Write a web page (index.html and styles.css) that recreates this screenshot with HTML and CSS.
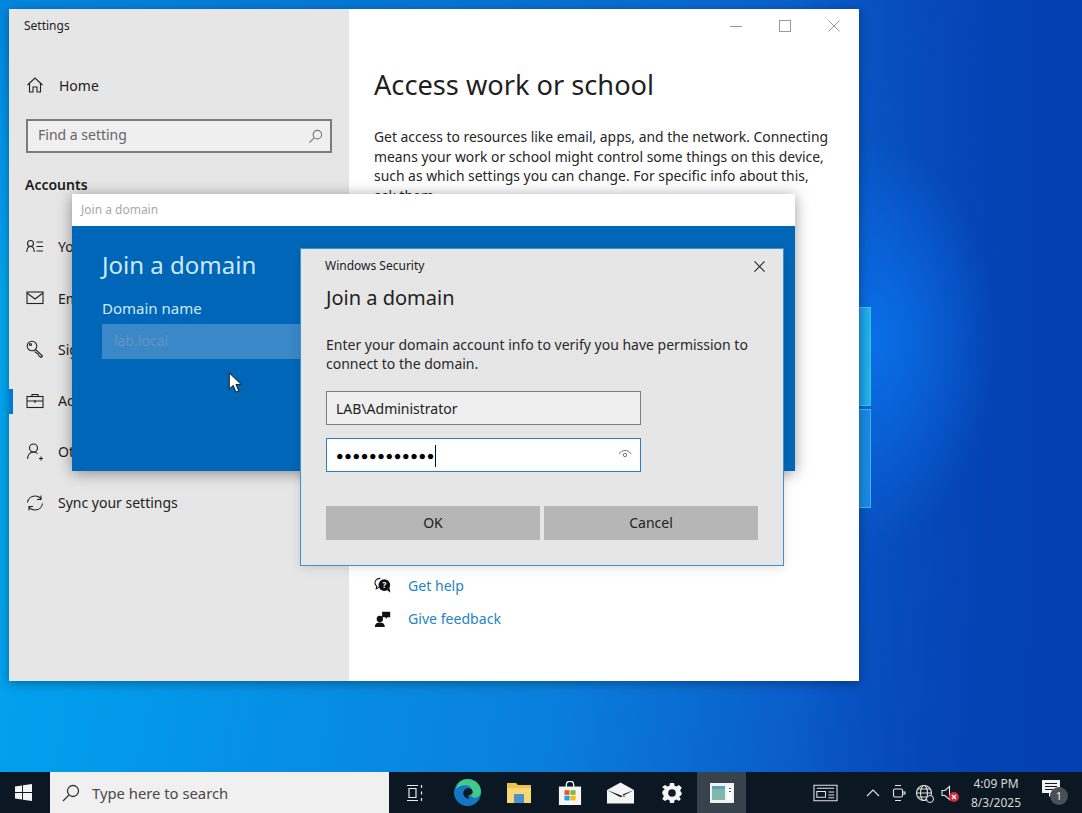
FILE: index.html
```html
<!DOCTYPE html>
<html>
<head>
<meta charset="UTF-8">
<title>Join a domain</title>
<link rel="stylesheet" href="styles.css">
</head>
<body>

<div class="desktop">
	<div class="glow"></div>
	<div class="logo-pane logo-top"></div>
	<div class="logo-pane logo-bottom"></div>

	<!-- settings window -->
	<div class="window settings">
		<div class="sidebar">
			<div class="app-title">Settings</div>
			<div class="nav-item home">
				<svg class="nav-icon" viewBox="0 0 18 18"><path d="M1.500 9 9 2l7.500 7M3.500 7.500V16h3.500v-5h4v5h3.500V7.500"/></svg>
				<span>Home</span>
			</div>
			<div class="find-box">
				<span class="find-text">Find a setting</span>
				<svg class="find-icon" viewBox="0 0 16 16"><circle cx="10" cy="6" r="4.500"/><path d="M6.800 9.200 1.500 14.500"/></svg>
			</div>
			<div class="section-title">Accounts</div>
			<div class="nav-list">
				<div class="nav-item">
					<svg class="nav-icon" viewBox="0 0 18 18"><circle cx="4.500" cy="5.500" r="3"/><path d="M.8 14c0-3.500 1.500-5.500 3.700-5.500S8.200 10.500 8.200 14M10.500 4H17M10.500 8.500H17M10.500 13H17"/></svg>
					<span>Your info</span>
				</div>
				<div class="nav-item">
					<svg class="nav-icon" viewBox="0 0 18 18"><rect x="1" y="3" width="16" height="11.500"/><path d="m1 4 8 6 8-6"/></svg>
					<span>Email &amp; accounts</span>
				</div>
				<div class="nav-item">
					<svg class="nav-icon" viewBox="0 0 18 18"><circle cx="6" cy="6" r="4.800"/><circle cx="4.500" cy="4.500" r="1"/><path d="m9.500 9.500 7 6.500-1.500 1.500-2-1.500-1-2-3.500-2.500"/></svg>
					<span>Sign-in options</span>
				</div>
				<div class="nav-item active">
					<svg class="nav-icon" viewBox="0 0 18 18"><rect x="1" y="4.500" width="16" height="11"/><path d="M6 4.500V2.500h6v2M1 9h16M9 8v3" /></svg>
					<span>Access work or school</span>
				</div>
				<div class="nav-item">
					<svg class="nav-icon" viewBox="0 0 18 18"><circle cx="7.500" cy="5" r="4"/><path d="M1.500 16c0-4 2.500-7 6-7 1.500 0 3 .6 4 1.600M13 15.500h4M15 13.500v4"/></svg>
					<span>Other users</span>
				</div>
				<div class="nav-item">
					<svg class="nav-icon" viewBox="0 0 18 18"><path d="M1.500 8.500C2 4.800 5 2 9 2c2.800 0 4.800 1.200 6 3.200M15 1.500v4h-4M16.500 9.500C16 13.200 13 16 9 16c-2.800 0-4.800-1.200-6-3.200M3 16.500v-4h4"/></svg>
					<span>Sync your settings</span>
				</div>
			</div>
		</div>
		<div class="main">
			<div class="caption-buttons">
				<svg viewBox="0 0 12 12"><path d="M0 6.500h12"/></svg>
				<svg viewBox="0 0 12 12"><rect x=".5" y=".5" width="11" height="11"/></svg>
				<svg viewBox="0 0 12 12"><path d="m.5.500 11 11M11.500.500l-11 11"/></svg>
			</div>
			<h1 class="page-title">Access work or school</h1>
			<p class="page-text">Get access to resources like email, apps, and the network. Connecting means your work or school might control some things on this device, such as which settings you can change. For specific info about this, ask them.</p>
			<div class="help-links">
				<div class="help-link">
					<svg viewBox="0 0 20 20"><path class="hollow" d="M7 1.500C3.500 1.500 1 3.800 1 6.500c0 1.500.8 2.800 2 3.700L2.500 13l3-1.500"/><circle cx="11.500" cy="9" r="6.500"/><path d="m14 14 4 3.500-.5-5z"/><text x="11.500" y="12" class="q">?</text></svg>
					<a>Get help</a>
				</div>
				<div class="help-link">
					<svg viewBox="0 0 20 20"><circle cx="6.500" cy="10" r="3.500"/><path d="M1 19c0-3.500 2-5 5.500-5s5.500 1.500 5.500 5zM9 2h9v6h-3l-2 2V8H9z"/></svg>
					<a>Give feedback</a>
				</div>
			</div>
		</div>
	</div>

	<!-- blue join dialog -->
	<div class="window join">
		<div class="join-title">Join a domain</div>
		<div class="join-body">
			<div class="join-heading">Join a domain</div>
			<div class="join-label">Domain name</div>
			<div class="join-input">lab.local</div>
		</div>
	</div>

	<svg class="cursor" viewBox="0 0 14 22"><path d="M1 1v17l4-4 3 7 3-1-3-7h5.500z"/></svg>

	<!-- credentials dialog -->
	<div class="window security">
		<div class="security-top">
			<span>Windows Security</span>
			<svg viewBox="0 0 12 12"><path d="m.5.500 11 11M11.500.500l-11 11"/></svg>
		</div>
		<div class="security-heading">Join a domain</div>
		<p class="security-text">Enter your domain account info to verify you have permission to connect to the domain.</p>
		<div class="field">LAB\Administrator</div>
		<div class="field focused">
			<span class="dots">●●●●●●●●●●●●</span><span class="caret"></span>
			<svg class="eye" viewBox="0 0 14 10"><path d="M1 5c1.500-2.500 3.500-3.500 6-3.500S11.500 2.500 13 5"/><circle cx="7" cy="6" r="1.700"/></svg>
		</div>
		<div class="button-row">
			<div class="btn">OK</div>
			<div class="btn">Cancel</div>
		</div>
	</div>

	<!-- taskbar -->
	<div class="taskbar">
		<div class="start">
			<svg viewBox="0 0 18 18"><path d="M0 2.600 7.400 1.500v7H0zM8.400 1.400 18 0v8.500H8.400zM0 9.500h7.400v7L0 15.400zM8.400 9.500H18V18L8.400 16.600z"/></svg>
		</div>
		<div class="search">
			<svg viewBox="0 0 18 18"><circle cx="11" cy="7" r="5.500"/><path d="M7 11 1 17"/></svg>
			<span>Type here to search</span>
		</div>
		<div class="task-icons">
			<div class="task-icon">
				<svg viewBox="0 0 18 18" class="line"><path d="M1 1.500h11M1 16.500h11M3 4.500h7v9H3zM15.500 1v3M15.500 7.500v3M15.500 14v3"/></svg>
			</div>
			<div class="task-icon">
				<svg class="edge" viewBox="0 0 26 26"><circle cx="13" cy="13" r="13" fill="#1477c4"/><path d="M13 0c7 0 13 5 13 12 0 4-3 6-6 6-2 0-4-1-4-3 0-1 1-2 1-4 0-3-3-5-6-5C7 6 4 7 2 10 3 4 7 0 13 0z" fill="#3fc98a"/><path d="M9 14c0-3 2-5 5-5 2.500 0 4 1.500 4 3.500 0 1-.5 2-1.500 2.500-1 .5-2 0-2.500 1-.5 1 0 2 1 3-3.500 0-6-2-6-5z" fill="#0c1a26"/></svg>
			</div>
			<div class="task-icon">
				<svg viewBox="0 0 24 20"><path d="M0 0h9l2 2h13v18H0z" fill="#f0c24d"/><path d="M0 5h24v15H0z" fill="#f8d775"/><path d="M7 11h10v9H7z" fill="#4d91c9"/></svg>
			</div>
			<div class="task-icon">
				<svg viewBox="0 0 24 26"><path d="M8 7V4c0-5 8-5 8 0v3" fill="none" stroke="#f2f2f2" stroke-width="1.500"/><path d="M0 6h24v20H0z" fill="#f5f5f5"/><path d="M6 10h5.500v5H6z" fill="#e8562a"/><path d="M12.500 10H18v5h-5.500z" fill="#7fba2a"/><path d="M6 16h5.500v5H6z" fill="#1d9fe6"/><path d="M12.500 16H18v5h-5.500z" fill="#f9b90a"/></svg>
			</div>
			<div class="task-icon">
				<svg class="mail" viewBox="0 0 26 20"><path d="M0 7 13 0l13 7v13H0z" fill="#f4f4f4"/><path d="M0 7l13 7 13-7-11 4.500L18 14z" fill="#0c1a26"/></svg>
			</div>
			<div class="task-icon">
				<svg class="gear" viewBox="0 0 20 20"><path d="M8 0h4l.6 2.800 1.900.8L17 2l2.800 2.800-1.600 2.500.8 1.900L20 10v0l-1 2.600-1.800.8 1.600 2.500L17 18l-2.500-1.600-1.900.8L12 20H8l-.6-2.800-1.900-.8L3 18 .2 15.900l1.600-2.500-.8-1.900L0 10l1-2.600 1.800-.8L.2 4.100 3 2l2.500 1.600 1.900-.8z" fill="#f4f4f4"/><circle cx="10" cy="10" r="3.800" fill="#0c1a26"/></svg>
			</div>
			<div class="task-icon running">
				<svg viewBox="0 0 24 20"><path d="M0 0h24v20H0z" fill="#eef2f0"/><path d="M2 3h13v14H2z" fill="#7fb8a8"/><path d="M2 3h13v3H2z" fill="#5a9fc0"/><path d="M17 3h5v14h-5z" fill="#fff"/><path d="M19 5h2v1h-2zM19 8h2v1h-2z" fill="#555"/></svg>
			</div>
		</div>
		<div class="tray">
			<svg class="tray-news" viewBox="0 0 26 18"><path d="M1 1h24v16H1zM4 4h18M4 7.500h9v6H4zM16 8h6M16 11h6M16 14h6"/></svg>
			<svg class="tray-chevron" viewBox="0 0 14 14"><path d="m1 10 6-6 6 6"/></svg>
			<svg class="tray-meet" viewBox="0 0 14 18"><rect x="1.500" y="5" width="9" height="8" rx="1.500"/><path d="M3 1.500h6M3 16.500h6M11 8h2v2h-2"/></svg>
			<div class="tray-globe">
				<svg viewBox="0 0 18 18"><circle cx="9" cy="9" r="7.500"/><ellipse cx="9" cy="9" rx="3.500" ry="7.500"/><path d="M1.500 9h15M2.500 5h13M2.500 13h13"/></svg>
				<span class="blocked"></span>
			</div>
			<div class="tray-sound">
				<svg viewBox="0 0 10 16"><path d="M1 5.500h3L8.500 1.500v13L4 10.500H1z"/></svg>
				<svg class="mute" viewBox="0 0 10 10"><circle cx="5" cy="5" r="5"/><path d="m3 3 4 4M7 3l-4 4"/></svg>
			</div>
			<div class="clock">
				<div>4:09 PM</div>
				<div>8/3/2025</div>
			</div>
			<div class="notify">
				<svg viewBox="0 0 18 18"><path d="M0 0h18v13h-7l-4 4v-4H0z"/><path class="notify-lines" d="M3 3.500h12M3 6.500h12M3 9.500h8"/></svg>
				<span class="badge">1</span>
			</div>
		</div>
	</div>
</div>

</body>
</html>
```

FILE: styles.css
```css
* {
	box-sizing: border-box;
}

html, body {
	margin: 0;
	height: 100%;
	overflow: hidden;
}

body {
	font-family: "Noto Sans", "Open Sans", sans-serif;
	color: #222;
}

.desktop {
	position: relative;
	width: 1082px;
	height: 813px;
	overflow: hidden;
	background: linear-gradient(100deg, #00a8f2 0%, #0a7fdc 55%, #0a58c8 78%, #0340b0 100%);
}

.glow {
	position: absolute;
	left: 0;
	top: 0;
	width: 1082px;
	height: 813px;
	background:
		radial-gradient(ellipse 120px 200px at 875px 340px, #0a6fe6 0%, rgba(10, 100, 225, 0) 100%),
		linear-gradient(to right, rgba(3, 64, 176, 0) 800px, #0440b2 1040px),
		linear-gradient(to bottom, rgba(8, 70, 190, 0.35) 0, rgba(8, 70, 190, 0) 300px);
}

.logo-pane {
	position: absolute;
	left: 858px;
	width: 13px;
	border: 1px solid rgba(90, 215, 240, 0.6);
	border-left: 0;
}

.logo-top {
	top: 307px;
	height: 99px;
	background: linear-gradient(to right, #1a9ae4, #24b4e8);
}

.logo-bottom {
	top: 409px;
	height: 99px;
	background: #1a8ae4;
}

.window {
	position: absolute;
}

/* settings window */

.settings {
	left: 9px;
	top: 9px;
	width: 850px;
	height: 672px;
	display: flex;
	box-shadow: 0 2px 10px rgba(0, 0, 0, 0.35);
}

.sidebar {
	width: 340px;
	background: #e6e6e6;
	padding: 0 17px;
}

.app-title {
	font-size: 12px;
	line-height: 16px;
	padding-top: 9px;
	margin-left: -2px;
	color: #222;
}

.nav-item {
	display: flex;
	align-items: center;
	gap: 15px;
	height: 52px;
	font-size: 14px;
	white-space: nowrap;
	position: relative;
}

.nav-icon {
	width: 18px;
	height: 18px;
	fill: none;
	stroke: #222;
	stroke-width: 1.100;
	flex: none;
}

.home {
	margin-top: 33px;
	height: 36px;
}

.find-box {
	display: flex;
	align-items: center;
	justify-content: space-between;
	width: 306px;
	height: 34px;
	margin-top: 16px;
	padding: 0 7px 0 10px;
	background: #efefef;
	border: 2px solid #7c7c7c;
	font-size: 14px;
	color: #666;
}

.find-text {
	margin-top: -3px;
}

.find-icon {
	width: 15px;
	height: 15px;
	fill: none;
	stroke: #777;
	stroke-width: 1.200;
}

.section-title {
	font-size: 14px;
	font-weight: 600;
	margin-top: 22px;
	margin-left: -1px;
	line-height: 20px;
	color: #1a1a1a;
}

.nav-list {
	margin-top: 26.400px;
}

.nav-list .nav-item {
	height: 51.200px;
	gap: 14px;
}

.active::before {
	content: "";
	position: absolute;
	left: -17px;
	top: 14px;
	width: 4px;
	height: 25px;
	background: #0078d7;
}

.main {
	position: relative;
	flex: 1;
	background: #fff;
	padding: 57px 0 0 25px;
}

.caption-buttons {
	position: absolute;
	right: 19px;
	top: 11px;
	display: flex;
	gap: 37px;
}

.caption-buttons svg {
	width: 12px;
	height: 12px;
	fill: none;
	stroke: #999;
	stroke-width: 1;
}

.page-title {
	margin: 0;
	font-size: 27.200px;
	font-weight: 400;
	line-height: 38px;
	color: #1f1f1f;
}

.page-text {
	width: 460px;
	margin: 23px 0 0;
	font-size: 13.900px;
	line-height: 19.500px;
	color: #262626;
}

.help-links {
	position: absolute;
	left: 25px;
	top: 560px;
}

.help-link {
	display: flex;
	align-items: center;
	gap: 16px;
	height: 33px;
	font-size: 14.100px;
	color: #1f84c6;
}

.help-link svg {
	width: 18px;
	height: 18px;
	fill: #111;
}

.help-link .hollow {
	fill: none;
	stroke: #111;
	stroke-width: 1.200;
}

.help-link .q {
	fill: #fff;
	font-size: 9px;
	font-weight: 700;
	text-anchor: middle;
}

/* join dialog */

.join {
	left: 72px;
	top: 194px;
	width: 723px;
	height: 277px;
	display: flex;
	flex-direction: column;
	box-shadow: 0 2px 14px rgba(0, 0, 0, 0.4);
}

.join-title {
	height: 32px;
	padding-left: 9px;
	background: #fff;
	font-size: 12px;
	line-height: 32px;
	color: #a8a8a8;
}

.join-body {
	flex: 1;
	background: #0067b8;
	padding: 21px 30px;
}

.join-heading {
	font-size: 24px;
	line-height: 36px;
	color: #cfe8f8;
}

.join-label {
	margin-top: 15px;
	font-size: 15px;
	line-height: 20px;
	color: #cfe8f8;
}

.join-input {
	width: 210px;
	height: 35px;
	margin-top: 6px;
	padding-left: 12px;
	background: #3a88c8;
	font-size: 14px;
	line-height: 33px;
	color: #6394c4;
}

.cursor {
	position: absolute;
	left: 228px;
	top: 372px;
	width: 14px;
	height: 21px;
	fill: #fff;
	stroke: #111;
	stroke-width: 1;
}

/* credentials dialog */

.security {
	left: 300px;
	top: 248px;
	width: 484px;
	height: 318px;
	padding: 0 25px;
	background: #e6e6e6;
	border: 1px solid #3d92cc;
	box-shadow: 0 2px 10px rgba(0, 0, 0, 0.12);
}

.security-top {
	display: flex;
	justify-content: space-between;
	align-items: center;
	height: 34px;
	padding-bottom: 2px;
	font-size: 12px;
	margin-left: -1px;
	color: #222;
}

.security-top svg {
	width: 11px;
	height: 11px;
	margin-top: 2px;
	margin-right: -7px;
	fill: none;
	stroke: #222;
	stroke-width: 1.200;
}

.security-heading {
	font-size: 20px;
	line-height: 30px;
	color: #222;
}

.security-text {
	margin: 22px 0 0;
	font-size: 14px;
	line-height: 19px;
	color: #2a2a2a;
}

.field {
	position: relative;
	display: flex;
	align-items: center;
	width: 315px;
	height: 34px;
	margin-top: 18px;
	padding: 1px 0 0 9px;
	background: #efefef;
	border: 1px solid #7f7f7f;
	font-size: 14px;
	color: #222;
}

.field.focused {
	margin-top: 13px;
	background: #fff;
	border-color: #2a7fc0;
}

.dots {
	font-size: 12.500px;
	letter-spacing: 0.700px;
	color: #000;
}

.caret {
	width: 1px;
	height: 22px;
	background: #111;
}

.eye {
	position: absolute;
	right: 8px;
	top: 10px;
	width: 14px;
	height: 10px;
	fill: none;
	stroke: #777;
	stroke-width: 1;
}

.button-row {
	display: flex;
	gap: 4px;
	margin-top: 34px;
}

.btn {
	flex: 1;
	height: 34px;
	background: #b6b6b6;
	font-size: 14px;
	line-height: 34px;
	text-align: center;
	color: #222;
}

/* taskbar */

.taskbar {
	position: absolute;
	left: 0;
	bottom: 0;
	width: 100%;
	height: 41px;
	display: flex;
	background: #0b1722;
}

.start {
	display: flex;
	align-items: center;
	justify-content: center;
	width: 50px;
	padding-right: 3px;
}

.start svg {
	width: 17px;
	height: 17px;
	fill: #f4f4f4;
}

.search {
	display: flex;
	align-items: center;
	gap: 12px;
	width: 339px;
	padding-left: 12px;
	background: #f0f0f0;
	font-size: 14.800px;
	color: #4a4a4a;
}

.search svg {
	width: 18px;
	height: 18px;
	fill: none;
	stroke: #333;
	stroke-width: 1.300;
}

.task-icons {
	display: flex;
	margin-left: 2px;
	align-items: stretch;
}

.task-icon {
	display: flex;
	align-items: center;
	justify-content: center;
	width: 51px;
}

.task-icon svg {
	width: 24px;
	height: 24px;
}

.task-icon .line {
	width: 18px;
	height: 18px;
	margin-right: 4px;
	fill: none;
	stroke: #e8e8e8;
	stroke-width: 1.200;
}

.task-icon .edge {
	width: 27px;
	height: 27px;
}

.task-icon .mail {
	width: 27px;
}

.task-icon .gear {
	width: 20px;
	height: 20px;
}

.running {
	width: 49px;
	margin-right: 2px;
	background: #36424c;
}

.tray {
	flex: 1;
	display: flex;
	align-items: center;
	padding-left: 65px;
}

.tray svg {
	fill: none;
	stroke: #e4e4e4;
	stroke-width: 1.100;
	flex: none;
}

.tray-news {
	width: 25px;
	height: 18px;
	margin-right: 28px;
}

.tray-chevron {
	width: 14px;
	height: 14px;
	margin-right: 12px;
}

.tray-meet {
	width: 14px;
	height: 18px;
	margin-right: 9px;
}

.tray-globe {
	position: relative;
	width: 18px;
	height: 18px;
	margin-right: 8px;
}

.tray-globe svg {
	display: block;
	width: 18px;
	height: 18px;
}

.blocked {
	position: absolute;
	right: -1px;
	bottom: -1px;
	width: 8px;
	height: 8px;
	border: 1px solid #e4e4e4;
	border-radius: 50%;
	background: #0b1722;
}

.tray-sound {
	position: relative;
	width: 18px;
	height: 18px;
}

.tray-sound svg {
	width: 10px;
	height: 16px;
}

.tray-sound .mute {
	position: absolute;
	left: 8px;
	top: 8px;
	width: 10px;
	height: 10px;
	fill: #d8283c;
	stroke: none;
}

.tray-sound .mute path {
	stroke: #fff;
	stroke-width: 1.200;
}

.clock {
	width: 62px;
	margin-left: 6px;
	font-size: 12px;
	line-height: 19px;
	text-align: center;
	color: #d8d8d8;
}

.notify {
	position: relative;
	width: 26px;
	height: 26px;
	margin-left: 15px;
}

.tray .notify svg {
	width: 18px;
	height: 18px;
	fill: #f0f0f0;
	stroke: none;
}

.tray .notify-lines {
	fill: none;
	stroke: #0b1722;
	stroke-width: 1;
}

.badge {
	position: absolute;
	left: 8px;
	top: 7px;
	width: 18px;
	height: 18px;
	border-radius: 50%;
	background: #4a4f55;
	font-size: 11px;
	line-height: 18px;
	text-align: center;
	color: #eee;
}
```
